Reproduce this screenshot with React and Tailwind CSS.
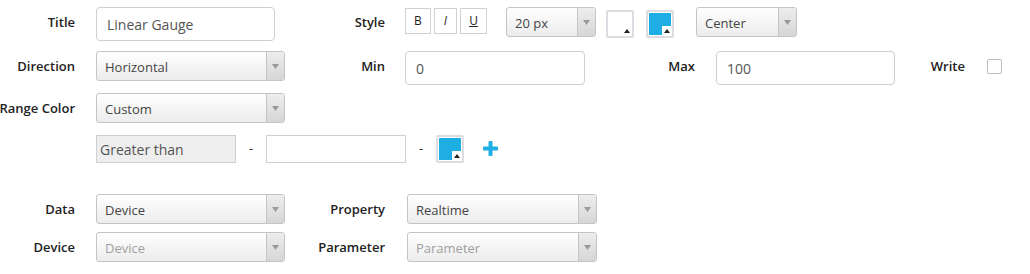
import React from "react";

const font = { fontFamily: '"Open Sans", "Liberation Sans", sans-serif' };

function Label({ children, w = "w-[75px]" }) {
  return (
    <div
      className={`${w} flex h-[30px] shrink-0 items-center justify-end whitespace-nowrap pt-[1px] text-[13px] font-semibold text-[#222]`}
    >
      {children}
    </div>
  );
}

function Select({ value, w, placeholder = false, h = "h-[30px]" }) {
  return (
    <div
      className={`${w} ${h} flex shrink-0 overflow-hidden rounded-[3px] border border-[#c4c4c4] bg-gradient-to-b from-white to-[#ececec]`}
    >
      <div
        className={`flex flex-1 items-center pl-[8px] pt-[3px] text-[13px] ${placeholder ? "text-[#a0a0a0]" : "text-[#444]"}`}
      >
        {value}
      </div>
      <div className="flex w-[18px] items-center justify-center border-l border-[#c4c4c4] bg-gradient-to-b from-[#ededed] to-[#d6d6d6]">
        <svg width="7" height="5" viewBox="0 0 7 5">
          <path d="M0 0 L7 0 L3.5 5 Z" fill="#9a9a9a" />
        </svg>
      </div>
    </div>
  );
}

function Input({ value, w, size = "text-[14px]" }) {
  return (
    <div
      className={`${w} h-[34px] flex shrink-0 items-center rounded-[4px] border border-[#cfcfcf] bg-white pl-[10px] pt-[1px] ${size} text-[#555]`}
    >
      {value}
    </div>
  );
}

function Swatch({ color }) {
  return (
    <div className="relative h-[28px] w-[28px] shrink-0 rounded-[2px] border-[2px] border-[#dcdde2] bg-white">
      <div className="h-full w-full p-[1px]">
        <div className="h-full w-full" style={{ background: color }} />
      </div>
      <div className="absolute bottom-0 right-0 flex h-[10px] w-[10px] items-center justify-center bg-white">
        <svg width="6" height="4" viewBox="0 0 6 4">
          <path d="M0 4 L6 4 L3 0 Z" fill="#222" />
        </svg>
      </div>
    </div>
  );
}

function FmtBtn({ children, cls = "", w = "w-[26px]" }) {
  return (
    <div
      className={`flex h-[26px] ${w} items-center justify-center border border-[#d0d0d0] bg-white text-[12px] text-[#222] ${cls}`}
    >
      {children}
    </div>
  );
}

export default function App() {
  return (
    <div className="h-[274px] w-[1030px] bg-white pt-[7px]" style={font}>
      {/* Row 1 */}
      <div className="flex h-[34px] items-start">
        <Label>Title</Label>
        <div className="ml-[21px] w-[214px] shrink-0">
          <Input value="Linear Gauge" w="w-[179px]" size="text-[14px]" />
        </div>
        <Label>Style</Label>
        <div className="ml-[20px] flex items-start">
          <div className="mt-[1px] flex gap-[3px]">
            <FmtBtn>B</FmtBtn>
            <FmtBtn cls="italic" w="w-[23px]">I</FmtBtn>
            <FmtBtn cls="underline" w="w-[27px]">U</FmtBtn>
          </div>
          <div className="ml-[19px]">
            <Select value="20 px" w="w-[90px]" />
          </div>
          <div className="ml-[10px] mt-[3px]">
            <Swatch color="#ffffff" />
          </div>
          <div className="ml-[12px] mt-[3px]">
            <Swatch color="#1eaee3" />
          </div>
          <div className="ml-[22px]">
            <Select value="Center" w="w-[101px]" />
          </div>
        </div>
      </div>

      {/* Row 2 */}
      <div className="mt-[10px] flex h-[34px] items-start">
        <Label>Direction</Label>
        <div className="ml-[21px] w-[214px] shrink-0">
          <Select value="Horizontal" w="w-[189px]" />
        </div>
        <Label>Min</Label>
        <div className="ml-[20px] w-[215px] shrink-0">
          <Input value="0" w="w-[180px]" />
        </div>
        <Label>Max</Label>
        <div className="ml-[21px] w-[194px] shrink-0">
          <Input value="100" w="w-[179px]" />
        </div>
        <Label w="w-[55px]">Write</Label>
        <div className="ml-[22px] mt-[8px] h-[15px] w-[15px] rounded-[2px] border border-[#bdbdbd] bg-white" />
      </div>

      {/* Row 3 */}
      <div className="mt-[8px] flex h-[30px] items-start">
        <Label>Range Color</Label>
        <div className="ml-[21px]">
          <Select value="Custom" w="w-[189px]" />
        </div>
      </div>

      {/* Row 4 */}
      <div className="mt-[11px] flex h-[29px] items-center">
        <div className="ml-[96px] flex h-[28px] w-[140px] items-center border border-[#cfcfcf] bg-[#eeeeee] pl-[3px] pt-[1px] text-[14px] text-[#555]">
          Greater than
        </div>
        <div className="w-[30px] text-center text-[13px] text-[#333]">-</div>
        <div className="h-[28px] w-[140px] border border-[#cfcfcf] bg-white" />
        <div className="w-[30px] text-center text-[13px] text-[#333]">-</div>
        <Swatch color="#1eaee3" />
        <div className="ml-[19px]">
          <svg width="15" height="15" viewBox="0 0 15 15">
            <rect x="5.5" y="0" width="4" height="15" rx="1" fill="#1eaee3" />
            <rect x="0" y="5.5" width="15" height="4" rx="1" fill="#1eaee3" />
          </svg>
        </div>
      </div>

      {/* Row 5 */}
      <div className="mt-[31px] flex h-[30px] items-start">
        <Label>Data</Label>
        <div className="ml-[21px] w-[214px] shrink-0">
          <Select value="Device" w="w-[189px]" />
        </div>
        <Label>Property</Label>
        <div className="ml-[22px]">
          <Select value="Realtime" w="w-[190px]" />
        </div>
      </div>

      {/* Row 6 */}
      <div className="mt-[8px] flex h-[30px] items-start">
        <Label>Device</Label>
        <div className="ml-[21px] w-[214px] shrink-0">
          <Select value="Device" w="w-[189px]" placeholder />
        </div>
        <Label>Parameter</Label>
        <div className="ml-[22px]">
          <Select value="Parameter" w="w-[190px]" placeholder />
        </div>
      </div>
    </div>
  );
}
